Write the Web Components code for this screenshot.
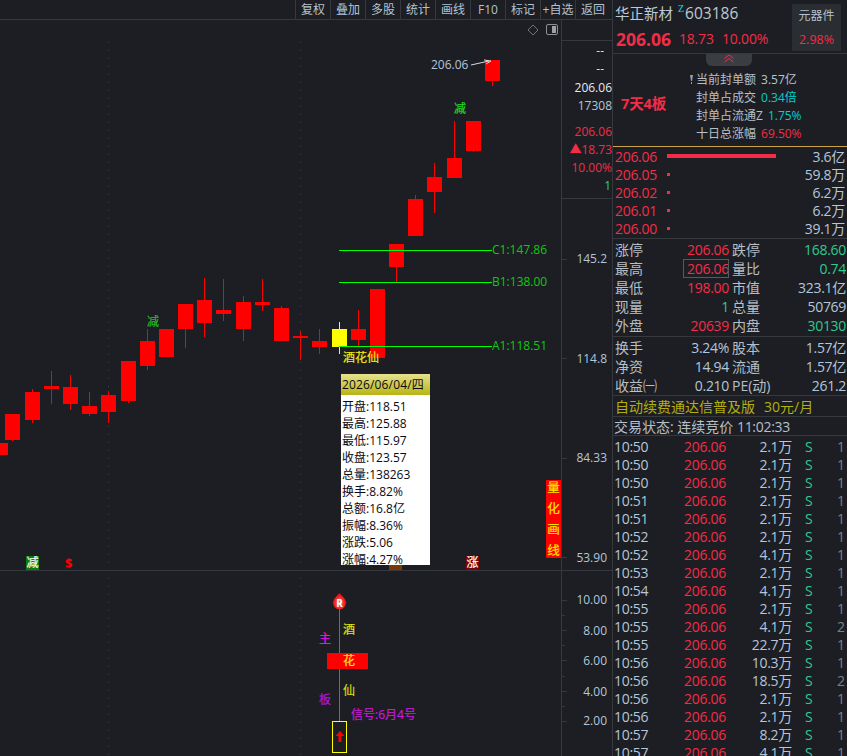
<!DOCTYPE html>
<html lang="zh"><head><meta charset="utf-8"><title>华正新材</title>
<style>
html,body{margin:0;height:100%;background:#1c1e23;overflow:hidden}
body{font:14px "Open Sans","Noto Sans CJK SC",sans-serif;color:#b4c4d6}
</style></head><body>
<ts-app></ts-app>
<script>
const FONT='"Open Sans","Noto Sans CJK SC",sans-serif';
const C={bg:'#1c1e23',line:'#35383d',red:'#f42c47',green:'#31c98f',text:'#b4c6da',label:'#b7bfc7',cyan:'#00cfd0'};
function el(tag,html,css){
  customElements.define(tag,class extends HTMLElement{
    constructor(){super();this.attachShadow({mode:'open'}).innerHTML=`<style>${css}</style>${typeof html==='function'?html(this):html}`;}
  });
}
el('ts-btn','<slot></slot>',`:host{display:flex;align-items:center;justify-content:center;width:34px;border-left:1px solid ${C.line};font-size:12px;color:#b6c2ce;white-space:nowrap;overflow:hidden;padding-bottom:1px}`);
el('ts-toolbar',`<ts-btn>复权</ts-btn><ts-btn>叠加</ts-btn><ts-btn>多股</ts-btn><ts-btn>统计</ts-btn><ts-btn>画线</ts-btn><ts-btn>F10</ts-btn><ts-btn>标记</ts-btn><ts-btn>+自选</ts-btn><ts-btn>返回</ts-btn>`,
`:host{display:flex;justify-content:flex-end;height:19px;border-bottom:1px solid ${C.line};padding-right:2px;box-sizing:content-box}`);

/* chart: everything inside is on a free canvas */
const candles=[[0,443,455,443,455],[12,414,440,414,441],[32,392,420,389,423],[51,386,389,371,404],[70,387,404,375,410],[89,406,414,392,416],[108,395,412,391,423],[128,361,401,361,403],[147,341,366,329,370],[166,329,357,329,357],[185,304,329,304,348],[204,300,323,278,337],[223,310,314,279,321],[243,302,329,296,341],[262,302,305,279,311],[281,308,341,306,341],[300,336,338,331,360],[319,341,347,329,354],[339,329,347,322,354,'#ffff00'],[358,329,340,310,346],[377,289,358,289,358],[396,244,267,244,282],[415,199,236,195,236],[434,177,192,163,213],[454,158,178,121,178],[473,121,151,121,152],[492,60,81,60,86]];
function candleSvg(){
  let s='';
  for(const [X,t,b,wt,wb,col] of candles){
    const c=col||'#ff0000';
    s+=`<rect x="${X}" y="${wt}" width="1" height="${wb-wt}" fill="${c}"/><rect x="${X-7}" y="${t}" width="15" height="${b-t}" fill="${c}"/>`;
  }
  return s;
}
function tick(x1,y,x2){return `<rect x="${x1}" y="${y}" width="${x2-x1}" height="1" fill="${C.line}"/>`;}
const chartHtml=()=>{
  const lab=(t,x,y,st='')=>`<span class="l" style="left:${x}px;top:${y-20-9}px;${st}">${t}</span>`;
  const axis=(t,y,col=C.text,st='')=>`<span class="l a" style="top:${y-20-8}px;color:${col};${st}">${t}</span>`;
  const cjk=(t,x,y,col,bg='')=>`<span class="l c" style="left:${x}px;top:${y-20-6}px;color:${col};${bg?`background:${bg};padding:0 .5px;`:''}">${t}</span>`;
  let ticks='';
  [259,358,458,557,600,630,660,691,721].forEach(y=>ticks+=tick(562,y,567));
  [615,645,676,706].forEach(y=>ticks+=tick(562,y,565));
  let dots='';
  for(let y=42;y<756;y+=8){ if(y>566&&y<574)continue; dots+=`<rect x="108" y="${y}" width="1" height="1"/><rect x="300" y="${y}" width="1" height="1"/>`; }
  return `<svg width="612" height="736" viewBox="0 20 612 736">
<defs><radialGradient id="r" cx=".5" cy=".6" r=".6"><stop offset="0" stop-color="#ff7a6a"/><stop offset=".7" stop-color="#f01818"/><stop offset="1" stop-color="#c80f0f"/></radialGradient></defs>
<g fill="#3b3e44">${dots}</g>
<rect x="0" y="570" width="612" height="1" fill="${C.line}"/>
<rect x="561" y="20" width="1" height="736" fill="${C.line}"/>
<rect x="562" y="40" width="50" height="1" fill="${C.line}"/>
<rect x="562" y="198" width="50" height="1" fill="${C.line}"/>
${ticks}
<path d="M533 25l5 5-5 5-5-5z" fill="none" stroke="#6e7278"/>
<rect x="546.500" y="24.500" width="11" height="10" rx="1.500" fill="none" stroke="#8d9196"/><rect x="552" y="26" width="4" height="7" fill="#9da1a6"/>
${candleSvg()}
<rect x="339" y="250" width="153" height="1" fill="#00ff00"/><rect x="339" y="282" width="153" height="1" fill="#00ff00"/><rect x="339" y="346" width="153" height="1" fill="#00ff00"/>
<path d="M471 65l18-4M484 60l7 1-5 3" fill="none" stroke="#d5dbe2"/>
<rect x="339" y="608" width="1" height="113" fill="#ec14e4"/>
<rect x="327" y="653" width="41" height="16" fill="#ff0000"/>
<rect x="332.500" y="721.500" width="14" height="31" fill="${C.bg}" stroke="#ffff00"/>
<path d="M340 731l-4.500 5h3v6h3v-6h3z" fill="#ff0000"/>
<path d="M339.500 593l4.800 5.200a6.600 6.600 0 1 1-9.600 0z" fill="url(#r)"/>
</svg>
${lab('206.06',431,65,`color:${C.text}`)}
${cjk('减',454,108,'#1edc1e')}${cjk('减',147,321,'#1fbf1f')}
${lab('C1:147.86',492,250,'color:#10c810')}${lab('B1:138.00',492,282,'color:#10c810')}${lab('A1:118.51',492,346,'color:#10c810')}
${cjk('酒花仙',343,357,'#f2ea10')}
${cjk('减',26,562,'#fff','#0a7d0a')}
<span class="l" style="left:65px;top:${563-20-9}px;color:#f00;font-weight:700;font-size:13px">$</span>
<span class="l c" style="left:389px;top:${565-20}px;width:13px;height:5px;background:#7a3a05"></span>
${cjk('涨',466,562,'#fff','#7a0505')}
<ts-vtag></ts-vtag>
<chart-tip></chart-tip>
${axis('--',50,'#d8dde2','right:8px')}${axis('--',68,'#d8dde2','right:8px')}
${axis('206.06',87,'#e4eaf0','right:0')}${axis('17308',105,C.text,'right:0')}
${axis('206.06',131,C.red,'right:0')}${axis('▲18.73',149,C.red,'right:0')}${axis('10.00%',167,C.red,'right:0')}${axis('1',185,C.green,'right:1px')}
${axis('145.2',258,C.text,'right:5px')}${axis('114.8',358,C.text,'right:5px')}${axis('84.33',457,C.text,'right:5px')}${axis('53.90',557,C.text,'right:5px')}
${axis('10.00',599,C.text,'right:5px')}${axis('8.00',630,C.text,'right:5px')}${axis('6.00',660,C.text,'right:5px')}${axis('4.00',691,C.text,'right:5px')}${axis('2.00',720,C.text,'right:5px')}
<span class="l w" style="left:334px;top:${603-20-7}px;width:11px;text-align:center;font-size:10px;line-height:14px;font-weight:700;color:#fff">R</span>
${cjk('酒',343,629,'#e2e410')}${cjk('花',343,660,'#ffe810')}${cjk('仙',343,690,'#d6dc10')}
${cjk('主',319,638,'#f010e8')}${cjk('板',319,699,'#b414d8')}
<span class="l c" style="left:351px;top:${714-20-6}px;color:#c818dc">信号:6月4号</span>`;
};
el('k-chart',chartHtml,`:host{display:block;position:relative;overflow:hidden;height:736px}
svg{position:absolute;left:0;top:0;display:block}
.l{position:absolute;white-space:nowrap;font-size:12px;line-height:18px}
.a{font-size:12px}
.c{font-size:12px;line-height:14px;-webkit-text-stroke:.2px currentColor}`);
el('chart-tip',()=>{
  const r=['开盘:118.51','最高:125.88','最低:115.97','收盘:123.57','总量:138263','换手:8.82%','总额:16.8亿','振幅:8.36%','涨跌:5.06','涨幅:4.27%'];
  return `<header>2026/06/04/四</header><section>${r.map(t=>`<div>${t}</div>`).join('')}</section>`;
},`:host{position:absolute;left:341px;top:354px;width:89px;height:191px;background:#fff;color:#0a0a14;font-size:12px;overflow:hidden;z-index:2}
header{height:21px;line-height:21px;padding-left:1px;background:linear-gradient(#e6e28e,#b8b414);white-space:nowrap;letter-spacing:.15px}
section{padding-top:3px}
div{height:17px;line-height:17px;padding-left:1px;white-space:nowrap}`);
el('ts-vtag','<span>量</span><span>化</span><span>画</span><span>线</span>',`:host{position:absolute;left:546px;top:460px;width:15px;height:78px;background:#f00;color:#ffe800;font-size:12.500px;display:flex;flex-direction:column;justify-content:center;align-items:center;-webkit-text-stroke:.2px currentColor}
span{display:block;flex:none;height:21px;line-height:21px}`);

/* right panel */
el('ts-head',`<div class="l"><div class="n">华正新材<sup>z</sup><span>603186</span></div><div class="p"><b>206.06</b><span>18.73</span><span>10.00%</span></div></div><div class="chip"><span>元器件</span><em>2.98%</em></div>`,
`:host{display:flex;height:54px;border-bottom:1px solid ${C.line};position:relative}
.l{flex:1;padding-left:2px}
.n{font-size:14.500px;height:27px;line-height:27px;color:#bcc9d6;white-space:nowrap}
.n span{font-size:15.500px}
sup{font-size:10px;color:#00e0f0;font-family:"Liberation Serif",serif;vertical-align:baseline;position:relative;top:-7px;margin:0 1px 0 5px;text-transform:uppercase}
.p{display:flex;color:${C.red};font-size:14px;line-height:24px;white-space:nowrap;letter-spacing:-.2px}
.p b{font-size:17.500px;width:64px;letter-spacing:0;padding-left:1px;box-sizing:border-box}.p span:nth-child(2){width:43px}
.chip{width:49px;margin:4px 6px 2px 0;background:#2a2d31;display:flex;flex-direction:column;align-items:center;font-size:12px;color:#b5c0ca;padding-top:3px;box-sizing:border-box;gap:6px;line-height:18px;white-space:nowrap}
em{font-style:normal;color:${C.red};font-size:12.500px}`);
const sealRow=(k,v,c,icon='')=>`<div>${icon}<span>${k}</span><i style="color:${c}">${v}</i></div>`;
el('ts-seal',`<div class="tab"><svg width="12" height="9" viewBox="0 0 12 9" fill="none" stroke="${C.red}"><path d="M1.500 4.500L6 1l4.500 3.500M1.500 8L6 4.500 10.500 8"/></svg></div>
<div class="b">7天4板</div><div class="list">
${sealRow('当前封单额','3.57亿',C.text,'<svg class="ic" width="3" height="9" viewBox="0 0 3 9"><path d="M0 0h3L2 6H1zM1 7h1v2H1z" fill="#9a9fa6"/></svg>')}
${sealRow('封单占成交','0.34倍',C.cyan)}${sealRow('封单占流通Z','1.75%',C.cyan)}${sealRow('十日总涨幅','69.50%',C.red)}</div>`,
`:host{display:flex;height:92px;border-bottom:1px solid #c9a24a;position:relative;box-sizing:content-box}
.tab{position:absolute;left:93px;top:0;width:46px;height:12px;background:#3a3d42;border-radius:0 0 6px 6px;display:flex;justify-content:center}
.b{width:84px;padding-left:8px;box-sizing:border-box;color:${C.red};font-weight:700;font-size:14.500px;line-height:100px;white-space:nowrap;letter-spacing:-.1px}
.list{position:absolute;left:83px;top:17px;font-size:12px;color:${C.label}}
.list div{height:18px;line-height:18px;white-space:nowrap}
i{font-style:normal;margin-left:5px}
.ic{position:absolute;left:-6px;top:4px}`);
el('order-row',h=>`<span class="p">${h.getAttribute('p')}</span><span class="b" style="width:${h.getAttribute('w')}px;height:${h.getAttribute('w')>9?4:3}px"></span><span class="v">${h.getAttribute('v')}</span>`,
`:host{display:flex;align-items:center;height:18px;padding:0 2px 0 2px;font-size:14px;letter-spacing:-.3px}
.p{color:${C.red};width:51px}
.b{margin-left:1px;background:${C.red}}
.v{margin-left:auto;color:${C.text};white-space:nowrap}`);
el('ts-orders',`<order-row p="206.06" w="109" v="3.6亿"></order-row><order-row p="206.05" w="3" v="59.8万"></order-row><order-row p="206.02" w="3" v="6.2万"></order-row><order-row p="206.01" w="3" v="6.2万"></order-row><order-row p="206.00" w="3" v="39.1万"></order-row>`,
`:host{display:block;height:92px;border-bottom:1px solid ${C.line}}`);
el('stat-row',h=>{
  const g=a=>h.getAttribute(a)||'';
  const col=c=>({r:C.red,g:C.green,t:C.text}[c]);
  return `<span class="k">${g('a')}</span><span class="v ${g('box')?'box':''}" style="color:${col(g('ac'))}">${g('b')}</span><span class="k k2">${g('c')}</span><span class="v2" style="color:${col(g('cc'))}">${g('d')}</span>`;
},`:host{display:grid;grid-template-columns:68px 46px 1fr auto;height:19px;line-height:19px;font-size:14px;padding:0 1px 0 2px;white-space:nowrap;position:relative}
.k{color:${C.label}}.k2{padding-left:3px}
.v,.v2{text-align:right;letter-spacing:-.3px}
.box{outline:1px solid #565a60;outline-offset:-1px}`);
const stat=(a,b,ac,c,d,cc,box='')=>`<stat-row a="${a}" b="${b}" ac="${ac}" c="${c}" d="${d}" cc="${cc}" ${box?'box="1"':''}></stat-row>`;
el('ts-stats',`<section>${stat('涨停','206.06','r','跌停','168.60','g')}${stat('最高','206.06','r','量比','0.74','g',1)}${stat('最低','198.00','r','市值','323.1亿','t')}${stat('现量','1','g','总量','50769','t')}${stat('外盘','20639','r','内盘','30130','g')}</section>
<section class="s2">${stat('换手','3.24%','t','股本','1.57亿','t')}${stat('净资','14.94','t','流通','1.57亿','t')}${stat('收益㈠','0.210','t','PE(动)','261.2','t')}</section>`,
`:host{display:block}section{height:98px;padding-top:1.500px;box-sizing:border-box;border-bottom:1px solid ${C.line}}.s2{height:59px;padding-top:1px}`);
el('ts-promo',`<span>自动续费通达信普及版</span><span>30元/月</span>`,`:host{display:flex;gap:9px;height:20px;line-height:21px;padding-left:2px;color:#b3ae10;font-size:14px;border-bottom:1px solid ${C.line};white-space:nowrap}`);
el('ts-status',`交易状态: 连续竞价 <span>11:02:33</span>`,`:host{display:block;height:18px;line-height:19px;padding-left:1px;color:${C.label};font-size:14px;border-bottom:1px solid ${C.line};white-space:nowrap}span{letter-spacing:-.3px}`);
el('tick-row',h=>{const g=a=>h.getAttribute(a);return `<span class="t">${g('t')}</span><span class="p">206.06</span><span class="v">${g('v')}</span><span class="s">S</span><span class="n">${g('n')}</span>`},
`:host{display:grid;grid-template-columns:42px 70px 66px 1fr 10px;height:18px;line-height:18px;font-size:14px;padding-left:1px;white-space:nowrap;letter-spacing:-.3px}
.t{color:${C.text}}.p{color:${C.red};text-align:right}.v{color:${C.text};text-align:right}.s{color:${C.green};padding-left:13px}.n{color:#7d8186;text-align:left;overflow:visible}`);
el('ts-ticks',()=>[['10:50','2.1万',1],['10:50','2.1万',1],['10:50','2.1万',1],['10:51','2.1万',1],['10:51','2.1万',1],['10:52','2.1万',1],['10:52','4.1万',1],['10:53','2.1万',1],['10:54','4.1万',1],['10:55','2.1万',1],['10:55','4.1万',2],['10:55','22.7万',1],['10:56','10.3万',1],['10:56','18.5万',2],['10:56','2.1万',1],['10:56','2.1万',1],['10:57','8.2万',1],['10:57','4.1万',1]].map(([t,v,n])=>`<tick-row t="${t}" v="${v}" n="${n}"></tick-row>`).join(''),
`:host{display:block;overflow:hidden;padding-top:2px}`);
el('quote-panel',`<ts-head></ts-head><ts-seal></ts-seal><ts-orders></ts-orders><ts-stats></ts-stats><ts-promo></ts-promo><ts-status></ts-status><ts-ticks></ts-ticks>`,
`:host{display:flex;flex-direction:column;height:756px;overflow:hidden;border-left:1px solid ${C.line};box-sizing:border-box}`);
el('ts-app',`<div class="left"><ts-toolbar></ts-toolbar><k-chart></k-chart></div><quote-panel></quote-panel>`,
`:host{display:grid;grid-template-columns:612px 235px;height:756px;width:847px;overflow:hidden;background:${C.bg};font-family:${FONT}}
.left{display:flex;flex-direction:column;min-width:0}`);
</script>
</body></html>
